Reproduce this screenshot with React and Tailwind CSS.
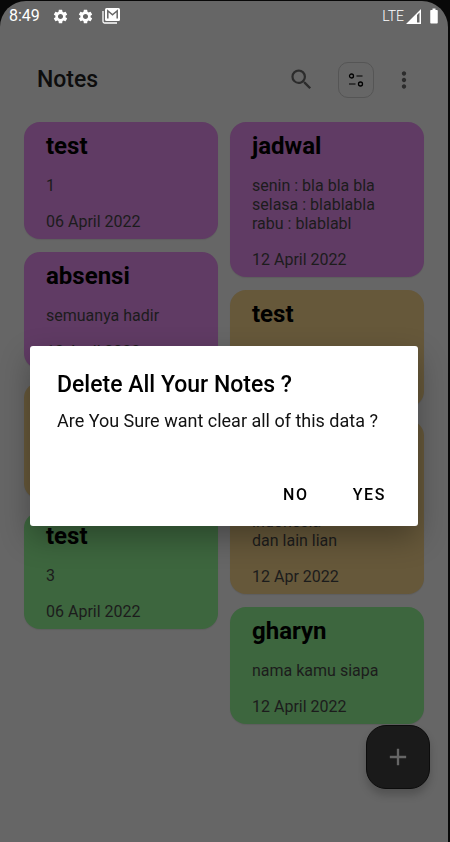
import { MdSettings, MdSearch, MdMoreVert, MdAdd, MdBatteryFull } from "react-icons/md";

const leftNotes = [
  { title: "test", lines: ["1"], date: "06 April 2022", color: "bg-[#603b64]" },
  { title: "absensi", lines: ["semuanya hadir"], date: "12 April 2022", color: "bg-[#603b64]" },
  { title: "test", lines: ["2"], date: "06 April 2022", color: "bg-[#66583a]" },
  { title: "test", lines: ["3"], date: "06 April 2022", color: "bg-[#3d663e]" },
];

const rightNotes = [
  {
    title: "jadwal",
    lines: ["senin : bla bla bla", "selasa : blablabla", "rabu : blablabl"],
    date: "12 April 2022",
    color: "bg-[#603b64]",
  },
  { title: "test", lines: ["2"], date: "06 April 2022", color: "bg-[#66583a]" },
  {
    title: "belajar",
    lines: ["matematika", "inggris", "indonesia", "dan lain lian"],
    date: "12 Apr 2022",
    color: "bg-[#66583a]",
  },
  { title: "gharyn", lines: ["nama kamu siapa"], date: "12 April 2022", color: "bg-[#3d663e]" },
];

function Note({ note }) {
  return (
    <article className={`rounded-2xl px-[22px] pt-[10px] pb-2 shadow-[0_1px_1px_rgba(0,0,0,0.08)] ${note.color}`}>
      <h2 className="text-2xl leading-7 font-bold text-black">{note.title}</h2>
      <div className="mt-4 text-base leading-[19px] text-[#1c1c1c]">
        {note.lines.map((line) => (
          <p key={line}>{line}</p>
        ))}
      </div>
      <p className="mt-[17px] text-base leading-[19px] text-[#1c1c1c]">{note.date}</p>
    </article>
  );
}

function MailStackIcon() {
  return (
    <svg width="18" height="16" viewBox="0 0 18 16" fill="none" aria-hidden="true">
      <path d="M1 3v10.500a1.500 1.500 0 0 0 1.500 1.500H15" stroke="white" strokeWidth="1.300" />
      <rect x="3" y="0" width="15" height="13" rx="1.500" fill="white" />
      <path d="M5.800 10.500V2.800l4.700 4 4.700-4v7.700" stroke="#666" strokeWidth="1.500" />
    </svg>
  );
}

function StatusBar() {
  return (
    <div className="flex h-[30px] items-center pr-[5px] pl-[9px] text-white">
      <span className="text-base leading-5">8:49</span>
      <MdSettings className="ml-3 size-[17px]" />
      <MdSettings className="ml-2 size-[17px]" />
      <span className="ml-2">
        <MailStackIcon />
      </span>
      <span className="ml-auto text-sm leading-5 font-light">LTE</span>
      <svg className="ml-[2px]" width="16" height="15" viewBox="0 0 16 15" aria-hidden="true">
        <path fill="white" fillRule="evenodd" d="M15 0v15H0L15 0ZM11 6v7.500h2.500V3.500L11 6Z" />
      </svg>
      <MdBatteryFull className="ml-[3px] size-[18px]" />
    </div>
  );
}

function Header() {
  return (
    <header className="flex h-[91px] items-center pt-2 pr-[31px] pb-[2px] pl-[37px]">
      <h1 className="text-[23px] leading-7 font-medium text-[#0d0d0d]">Notes</h1>
      <button type="button" aria-label="Search" className="ml-auto text-[#2c2c2c]">
        <MdSearch className="size-[27px]" />
      </button>
      <button
        type="button"
        aria-label="View options"
        className="ml-[23px] flex size-9 items-center justify-center rounded-[10px] border border-[#555]"
      >
        <svg width="16" height="14" viewBox="0 0 16 14" fill="none" strokeWidth="1.300" aria-hidden="true">
          <circle cx="3.500" cy="3" r="2" stroke="black" />
          <path d="M8.500 3h6M1 11h6.500" stroke="#222" />
          <circle cx="12.500" cy="11" r="2" stroke="black" />
        </svg>
      </button>
      <button type="button" aria-label="More" className="ml-[17px] text-[#2c2c2c]">
        <MdMoreVert className="size-[26px]" />
      </button>
    </header>
  );
}

function DeleteDialog() {
  return (
    <div className="fixed inset-0 flex items-center pt-[30px] pr-8 pl-[30px]">
      <section
        role="dialog"
        aria-modal="true"
        aria-labelledby="dialog-title"
        className="w-full rounded-[3px] bg-white px-[27px] pt-[25px] pb-[13px] text-black shadow-[0_12px_30px_rgba(0,0,0,0.3)]"
      >
        <h2 id="dialog-title" className="text-[23px] leading-7 font-medium">
          Delete All Your Notes ?
        </h2>
        <p className="mt-[10px] text-lg leading-6 text-[#111]">Are You Sure want clear all of this data ?</p>
        <div className="mt-11 flex justify-end gap-4">
          <button type="button" className="h-9 px-[14px] text-base font-medium tracking-widest">
            NO
          </button>
          <button type="button" className="h-9 pr-[5px] pl-[14px] text-base font-medium tracking-widest">
            YES
          </button>
        </div>
      </section>
    </div>
  );
}

export default function App() {
  return (
    <div className="min-h-screen bg-[#080808] pt-px pr-[2px] font-[Roboto,sans-serif]">
      <div className="min-h-[calc(100vh-1px)] rounded-t-[26px] bg-[#666]">
        <StatusBar />
        <Header />
        <main className="grid grid-cols-2 items-start gap-3 px-6 pb-[118px]">
          <div className="flex flex-col gap-[13px]">
            {leftNotes.map((note, i) => (
              <Note key={i} note={note} />
            ))}
          </div>
          <div className="flex flex-col gap-[13px]">
            {rightNotes.map((note, i) => (
              <Note key={i} note={note} />
            ))}
          </div>
        </main>
      </div>
      <button
        type="button"
        aria-label="Add note"
        className="fixed right-5 bottom-[53px] flex size-16 items-center justify-center rounded-[20px] border border-[#0c0c0c] bg-[#1a1a1a] text-[#666] shadow-[0_6px_8px_rgba(0,0,0,0.2)]"
      >
        <MdAdd className="size-7" />
      </button>
      <DeleteDialog />
    </div>
  );
}
